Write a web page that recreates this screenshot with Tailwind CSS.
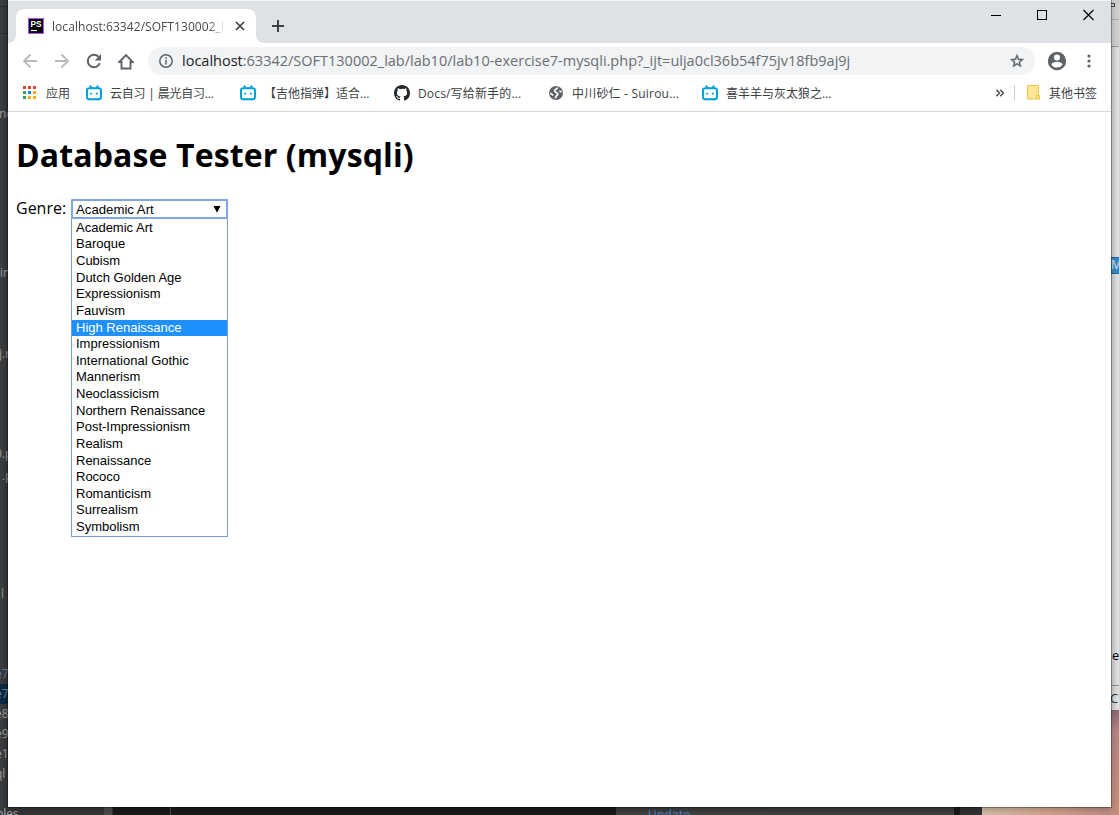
<!DOCTYPE html>
<html lang="zh-CN">
<head>
<meta charset="utf-8">
<title>Database Tester (mysqli)</title>
<script src="https://cdn.jsdelivr.net/npm/@tailwindcss/browser@4"></script>
</head>
<body class="relative w-[1119px] h-[815px] overflow-hidden bg-[#1a1a1a] text-black font-['Open_Sans','Noto_Sans_CJK_SC',sans-serif]">
<svg width="0" height="0" class="absolute">
  <symbol id="bili" viewBox="0 0 16 16"><g fill="none" stroke="#00a1d6" stroke-linecap="round"><path d="M4.300 1.200 6 3M11.700 1.200 10 3" stroke-width="1.700"/><rect x="1" y="3.200" width="14" height="11" rx="2.300" stroke-width="2"/><path d="M5.200 7.800v1.600M10.800 7.800v1.600" stroke-width="1.900" stroke-linecap="butt"/></g><path d="M3.500 14h2v1.200h-2zM10.500 14h2v1.200h-2z" fill="#00a1d6"/></symbol>
</svg>

<!-- editor sidebar behind the browser -->
<div class="absolute left-0 top-0 w-[113px] h-[815px] bg-linear-to-r from-[#3c3f41] to-[#343537] to-[8px] overflow-hidden text-[12px] leading-[16px] text-[#9b9c9d] whitespace-nowrap">
  <div class="absolute top-[6px] w-2 h-px bg-[#292a2b]"></div>
  <div class="absolute top-[33px] w-2 h-px bg-[#292a2b]"></div>
  <div class="absolute top-[684px] w-2 h-[20px] bg-[#0c2940]"></div>
  <span class="absolute left-[-1px] top-[106px]">no</span>
  <span class="absolute left-0 top-[265px]">in</span>
  <span class="absolute left-[-1px] top-[346px]">j.r</span>
  <span class="absolute left-[-5px] top-[446px]">0.p</span>
  <span class="absolute left-[2px] top-[468px]">.p</span>
  <span class="absolute left-px top-[586px] text-[#7aa27a]">l</span>
  <span class="absolute left-[-5px] top-[666px] text-[#6580a5]">e7</span>
  <span class="absolute left-[-5px] top-[686px] text-[#6580a5]">e7</span>
  <span class="absolute left-[-5px] top-[706px]">e8</span>
  <span class="absolute left-[-5px] top-[726px]">e9</span>
  <span class="absolute left-[-5px] top-[746px]">e1</span>
  <span class="absolute left-[-5px] top-[766px]">ql</span>
  <span class="absolute left-[-4px] top-[806px] text-[#a8a8a8]">ples</span>
  <div class="absolute left-[104px] top-[807px] w-[8px] h-[8px] bg-[#4b4c4e]"></div>
</div>
<!-- editor bottom strip -->
<div class="absolute left-[170px] top-[807px] w-px h-2 bg-[#4a4a4a]"></div>
<div class="absolute left-[616px] top-[807px] w-[338px] h-2 bg-linear-to-b from-[#353739] to-[#444547] overflow-hidden"><span class="absolute left-8 top-0 text-[12px] leading-[16px] text-[#4a80c8] tracking-[.2px]">Update</span></div>
<div class="absolute left-[960px] top-[807px] w-[22px] h-2 bg-[#303234]"></div>
<!-- wallpaper -->
<div class="absolute left-[982px] top-[807px] w-[137px] h-2 bg-linear-to-r from-[#d3bda6] via-[#d0a18d] to-[#b98980]"></div>
<div class="absolute left-[1111px] top-[710px] w-2 h-[105px] bg-linear-to-b from-[#8b6874] via-[#b58583] via-20% to-[#c48f7d]"></div>
<!-- window on the right -->
<div class="absolute left-[1111px] top-0 w-2 h-[710px] bg-linear-to-r from-[#cccccc] to-[#e2e2e2] overflow-hidden text-[13px] leading-[16px]">
  <div class="absolute top-0 w-2 h-[46px] bg-[#cfcfcf]"></div>
  <div class="absolute top-[19px] w-2 h-px bg-[#b0b0b0]"></div>
  <div class="absolute top-[46px] w-2 h-px bg-[#999]"></div>
  <div class="absolute top-[3px] -left-px w-[5px] h-[4px] border border-[#444]"></div>
  <div class="absolute top-[257px] w-2 h-[17px] bg-[#3d85c0] border-y border-[#1a67a8] text-[#dbe9f5] text-[12px] leading-[14px]">M</div>
  <span class="absolute left-px top-[647px]">e</span>
  <div class="absolute top-[685px] w-2 h-px bg-[#888]"></div>
  <span class="absolute -left-px top-[690px] text-[#234]">C</span>
</div>

<!-- browser window -->
<main class="absolute left-2 top-0 w-[1103px] h-[807px] bg-white flex flex-col shadow-[0_0_0_1px_#0000004d,0_2px_7px_#00000044]">
  <!-- tab strip -->
  <header class="h-[43px] shrink-0 bg-[#dee1e6] border-t border-[#f3f4f5] flex justify-between">
    <div class="flex items-end">
      <div class="w-2 h-2 bg-white"><div class="size-2 bg-[#dee1e6] rounded-br-lg"></div></div>
      <div class="w-[240px] h-[34px] bg-white rounded-t-lg flex items-center pl-3">
        <svg class="shrink-0" width="16" height="16" viewBox="0 0 16 16"><rect width="16" height="16" fill="#b74af7"/><rect x="1" y="1" width="14" height="14" fill="#000"/><text x="2.500" y="9" font-size="8.500" font-weight="bold" font-family="Liberation Sans" fill="#fff" textLength="11" lengthAdjust="spacingAndGlyphs">PS</text><path d="M3 12.500h6" stroke="#fff" stroke-width="1.200"/></svg>
        <span class="relative top-px ml-2 w-[174px] shrink-0 overflow-hidden whitespace-nowrap text-[12px] leading-[18px] tracking-[.06px] text-[#45494d] mask-r-from-90% mask-r-to-100%">localhost:63342/SOFT130002_l</span>
        <svg class="ml-[9px]" width="10" height="10" viewBox="0 0 10 10"><path d="M1 1l8 8M9 1 1 9" stroke="#3c4043" stroke-width="1.700"/></svg>
      </div>
      <div class="w-2 h-2 bg-white"><div class="size-2 bg-[#dee1e6] rounded-bl-lg"></div></div>
      <svg class="ml-2 mb-[11px]" width="12" height="12" viewBox="0 0 12 12"><path d="M6 0v12M0 6h12" stroke="#3c4043" stroke-width="2"/></svg>
    </div>
    <div class="flex gap-[35px] pr-[17px] pt-[8px]">
      <svg width="11" height="12" viewBox="0 0 11 12"><path d="M0 6.500h10" stroke="#000"/></svg>
      <svg width="11" height="12" viewBox="0 0 11 12"><rect x=".5" y="1.500" width="9" height="9" fill="none" stroke="#000"/></svg>
      <svg width="11" height="12" viewBox="0 0 11 12"><path d="M.5 1l10 10M10.500 1l-10 10" stroke="#000" stroke-width="1.100"/></svg>
    </div>
  </header>
  <!-- toolbar -->
  <div class="h-[36px] shrink-0 flex items-center pl-[14px]">
    <svg width="16" height="16" viewBox="0 0 16 16" fill="none" stroke="#b9bbbd" stroke-width="1.900"><path d="M15 8H2.500M8.500 1.500 2 8l6.500 6.500"/></svg>
    <svg class="ml-4" width="16" height="16" viewBox="0 0 16 16" fill="none" stroke="#b9bbbd" stroke-width="1.900"><path d="M1 8h12.500M7.500 1.500 14 8l-6.500 6.500"/></svg>
    <svg class="ml-4" width="16" height="16" viewBox="0 0 16 16"><path d="M13.800 10.200A6.200 6.200 0 1 1 12.600 3.900" fill="none" stroke="#5f6368" stroke-width="2"/><path d="M15 1v6.500H8.700z" fill="#5f6368"/></svg>
    <svg class="ml-4" width="16" height="17" viewBox="0 0 16 17"><path d="M1.300 9 8 2.200 14.700 9H12.500v6.500h-9V9z" fill="none" stroke="#5f6368" stroke-width="1.900"/></svg>
    <div class="ml-[14px] w-[887px] h-7 rounded-full bg-[#f1f3f4] flex items-center pl-[11px] pr-[10px]">
      <svg width="14" height="14" viewBox="0 0 14 14"><circle cx="7" cy="7" r="6.200" fill="none" stroke="#5f6368" stroke-width="1.500"/><path d="M7 6v4.500M7 3.300v1.700" stroke="#5f6368" stroke-width="1.500"/></svg>
      <span class="ml-[9px] text-[14.500px] leading-[20px] whitespace-nowrap text-[#6a6e73]"><span class="text-[#202124]">localhost</span>:63342/SOFT130002_lab/lab10/lab10-exercise7-mysqli.php?_ijt=ulja0cl36b54f75jv18fb9aj9j</span>
      <svg class="ml-auto" width="16" height="16" viewBox="0 0 24 24"><path d="M22 9.240l-7.190-.62L12 2 9.190 8.630 2 9.240l5.460 4.730L5.820 21 12 17.270 18.180 21l-1.630-7.030zM12 15.400l-3.760 2.270 1-4.280-3.320-2.880 4.380-.38L12 6.100l1.710 4.040 4.380.38-3.320 2.880 1 4.280z" fill="#5f6368" stroke="#5f6368" stroke-width=".7"/></svg>
    </div>
    <svg class="ml-[11px]" width="22" height="22" viewBox="0 0 24 24"><path d="M12 2a10 10 0 100 20 10 10 0 000-20zm0 3a3.200 3.200 0 110 6.500A3.200 3.200 0 0112 5zm0 14.200a7.200 7.200 0 01-6-3.220c.03-2 4-3.080 6-3.080s5.970 1.090 6 3.080a7.200 7.200 0 01-6 3.220z" fill="#5f6368"/></svg>
    <svg class="ml-[19px]" width="4" height="14" viewBox="0 0 4 14" fill="#5f6368"><circle cx="2" cy="2" r="1.600"/><circle cx="2" cy="7" r="1.600"/><circle cx="2" cy="12" r="1.600"/></svg>
  </div>
  <!-- bookmarks -->
  <nav class="h-[33px] shrink-0 border-b border-[#d5d7da] flex items-center pb-[5px] text-[12px] leading-[18px] text-[#3c4043] whitespace-nowrap [&_span]:pt-[2px]">
    <div class="ml-[15px] w-[63px] flex items-center"><svg width="13" height="13" viewBox="0 0 13 13"><path fill="#ea4335" d="M0 0h3v3H0zM5 0h3v3H5zM10 0h3v3h-3z"/><path fill="#34a15c" d="M0 5h3v3H0zM0 10h3v3H0z"/><path fill="#1a86f0" d="M5 5h3v3H5z"/><path fill="#fbab07" d="M10 5h3v3h-3zM5 10h3v3H5zM10 10h3v3h-3z"/></svg><span class="ml-[10px]">应用</span></div>
    <div class="w-[154px] flex items-center gap-2"><svg width="16" height="16"><use href="#bili"/></svg><span class="tracking-[-.2px]">云自习 | 晨光自习...</span></div>
    <div class="w-[154px] flex items-center gap-2"><svg width="16" height="16"><use href="#bili"/></svg><span>【吉他指弹】适合...</span></div>
    <div class="w-[154px] flex items-center gap-2"><svg width="16" height="16" viewBox="0 0 16 16"><path fill="#24292e" d="M8 0C3.580 0 0 3.580 0 8c0 3.540 2.290 6.530 5.470 7.590.4.070.55-.17.55-.38v-1.490c-2.010.37-2.530-.49-2.690-.94-.09-.23-.48-.94-.82-1.130-.28-.15-.68-.52-.01-.53.63-.01 1.080.58 1.230.82.72 1.210 1.870.87 2.330.66.07-.52.28-.87.51-1.070-1.780-.2-3.640-.89-3.640-3.950 0-.87.31-1.590.82-2.150-.08-.2-.36-1.020.08-2.120 0 0 .67-.21 2.200.82A7.600 7.600 0 018 3.860c.68 0 1.360.09 2 .27 1.530-1.040 2.200-.82 2.200-.82.44 1.100.16 1.920.08 2.120.51.56.82 1.270.82 2.150 0 3.070-1.870 3.750-3.650 3.950.29.25.54.73.54 1.480v2.200c0 .21.15.46.55.38A8 8 0 0016 8c0-4.420-3.580-8-8-8z"/></svg><span class="tracking-[.16px]">Docs/写给新手的...</span></div>
    <div class="w-[154px] flex items-center gap-2"><svg width="16" height="16" viewBox="0 0 16 16"><circle cx="8" cy="8" r="7" fill="#5f6368"/><path d="M9.600 2.600C9.600 4.300 7 3.600 6.600 5.500S9.500 7.300 9.800 9 7.800 9.800 7.400 13.300" fill="none" stroke="#fff" stroke-width="1.700"/><path d="M2.200 8.200 5.400 10.300M11.300 5.900l2.300 1" stroke="#fff" stroke-width="1.600"/></svg><span class="tracking-[.2px]">中川砂仁 - Suirou...</span></div>
    <div class="flex items-center gap-2"><svg width="16" height="16"><use href="#bili"/></svg><span>喜羊羊与灰太狼之...</span></div>
    <div class="ml-auto flex items-center pr-[14px]">
      <svg width="8" height="8" viewBox="0 0 8 8" fill="none" stroke="#50545a" stroke-width="1.600"><path d="M.5.8 3.500 4l-3 3.200M4.300.8 7.300 4l-3 3.200"/></svg>
      <div class="ml-[10px] w-px h-4 bg-[#caccd0]"></div>
      <svg class="ml-[12px]" width="13" height="15" viewBox="0 0 13 15"><path d="M.5.5h11v13.500H.5z" fill="#ffe694" stroke="#ecc546"/><path d="M9.500 10.500h3v3.500h-3z" fill="#ffe694" stroke="#ecc546"/></svg>
      <span class="ml-[9px]">其他书签</span>
    </div>
  </nav>
  <!-- page -->
  <section class="px-2 pt-[19px]">
    <h1 class="text-[32px] leading-[48px] font-bold tracking-[.12px] whitespace-nowrap">Database Tester (mysqli)</h1>
    <div class="mt-[20px] flex items-start">
      <label class="w-[54px] -mt-px text-[16px] leading-[20px] whitespace-nowrap">Genre:</label>
      <div class="ml-px w-[157px] font-['Liberation_Sans',Arial,sans-serif] text-[13px]">
        <div class="h-[20px] border-2 border-[#7fa5e2] rounded-[1px] flex items-center justify-between pl-[3px] pr-[5px]"><span class="pt-px text-[13.200px]">Academic Art</span><svg width="8" height="7" viewBox="0 0 8 7"><path d="M.5 0h7L4 6.800z"/></svg></div>
        <ul class="h-[318px] border border-t-0 border-[#7a9cd3] pt-[.8px] leading-[16.630px] [&>li]:h-[16.630px] [&>li]:pl-1">
          <li>Academic Art</li><li>Baroque</li><li>Cubism</li><li>Dutch Golden Age</li><li>Expressionism</li><li>Fauvism</li><li class="bg-[#1e90ff] text-white">High Renaissance</li><li>Impressionism</li><li>International Gothic</li><li>Mannerism</li><li>Neoclassicism</li><li>Northern Renaissance</li><li>Post-Impressionism</li><li>Realism</li><li>Renaissance</li><li>Rococo</li><li>Romanticism</li><li>Surrealism</li><li>Symbolism</li>
        </ul>
      </div>
    </div>
  </section>
</main>
</body>
</html>
